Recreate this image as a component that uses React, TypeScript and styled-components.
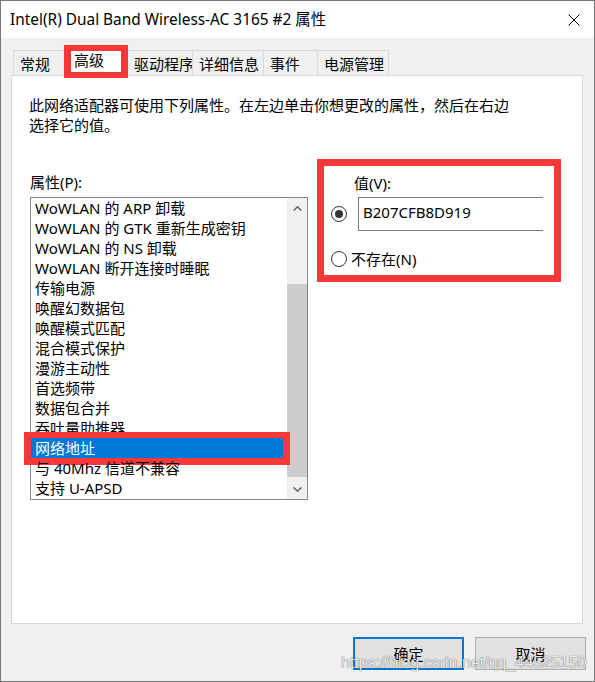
import React from 'react';
import styled, { createGlobalStyle } from 'styled-components';

const GlobalStyle = createGlobalStyle`
  html, body {
    margin: 0;
    padding: 0;
    background: #ffffff;
  }
  body {
    font-family: "Noto Sans", "Noto Sans CJK SC", sans-serif;
    font-size: 15px;
    color: #000000;
  }
  * {
    box-sizing: border-box;
  }
`;

const RED = '#f83838';

const Window = styled.div`
  position: relative;
  width: 595px;
  height: 682px;
  border: 1px solid #777777;
  background: #f0f0f0;
  display: flex;
  flex-direction: column;
`;

const TitleBar = styled.div`
  height: 37px;
  flex-shrink: 0;
  background: #ffffff;
  display: flex;
  align-items: center;
  justify-content: space-between;
  padding: 0 14px 0 9px;
`;

const Title = styled.span`
  font-size: 15.4px;
  line-height: 20px;
  white-space: nowrap;
`;

const Body = styled.div`
  flex: 1;
  padding: 12px 8px 0 10px;
  display: flex;
  flex-direction: column;
`;

const TabRow = styled.div`
  display: flex;
  align-items: flex-start;
  height: 25px;
  margin-left: 2px;
`;

const Tab = styled.div<{ $w: number; $active?: boolean }>`
  position: relative;
  width: ${p => p.$w}px;
  height: ${p => (p.$active ? 28 : 25)}px;
  margin-top: ${p => (p.$active ? -2 : 0)}px;
  padding: ${p => (p.$active ? '1px 0 0 9px' : '3px 0 0 6px')};
  font-size: 15px;
  line-height: 20px;
  white-space: nowrap;
  background: ${p => (p.$active ? '#ffffff' : '#f0f0f0')};
  border: 1px solid #d9d9d9;
  border-bottom: none;
  margin-right: -1px;
  z-index: ${p => (p.$active ? 2 : 1)};

  ${p =>
    p.$active &&
    `
    &::after {
      content: '';
      position: absolute;
      left: -1px;
      right: -1px;
      top: -4px;
      bottom: -2px;
      border: 7px solid ${RED};
      border-top-width: 6px;
      border-bottom-width: 6px;
    }
  `}
`;

const Panel = styled.div`
  width: 572px;
  height: 549px;
  background: #ffffff;
  border: 1px solid #d9d9d9;
  padding: 19px 0 0 17px;
`;

const Description = styled.div`
  font-size: 15px;
  line-height: 20px;
  white-space: nowrap;
`;

const Columns = styled.div`
  display: flex;
  align-items: flex-start;
  margin-top: 24px;
`;

const LeftColumn = styled.div`
  margin: 13px 0 0 1px;
  width: 278px;
`;

const FieldLabel = styled.div`
  font-size: 15px;
  line-height: 20px;
  white-space: nowrap;
`;

const ListBox = styled.div`
  margin-top: 5px;
  width: 278px;
  height: 303px;
  border: 1px solid #828790;
  display: flex;
`;

const Items = styled.div`
  flex: 1;
`;

const Item = styled.div<{ $selected?: boolean }>`
  position: relative;
  height: 20px;
  padding-left: 4px;
  font-size: 15px;
  line-height: 20px;
  white-space: nowrap;
  background: ${p => (p.$selected ? '#0078d7' : 'transparent')};
  color: ${p => (p.$selected ? '#ffffff' : '#000000')};

  ${p =>
    p.$selected &&
    `
    &::after {
      content: '';
      position: absolute;
      left: -7px;
      right: -3px;
      top: -6px;
      bottom: -7px;
      border: 7px solid ${RED};
      border-top-width: 6px;
    }
  `}
`;

const ScrollBar = styled.div`
  width: 20px;
  background: #f0f0f0;
  display: flex;
  flex-direction: column;
`;

const ScrollButton = styled.div`
  height: 20px;
  display: flex;
  align-items: center;
  justify-content: center;
`;

const ScrollTrack = styled.div`
  flex: 1;
  padding-top: 66px;
`;

const Thumb = styled.div`
  height: 193px;
  background: #cdcdcd;
`;

const RightGroup = styled.div`
  position: relative;
  margin-left: 9px;
  width: 244px;
  height: 123px;
  padding-top: 14px;

  &::after {
    content: '';
    position: absolute;
    inset: 0;
    border: 7px solid ${RED};
  }
`;

const ValueLabel = styled(FieldLabel)`
  margin-left: 37px;
`;

const RadioRow = styled.div<{ $gap: number }>`
  display: flex;
  align-items: center;
  padding-left: 14px;
  gap: ${p => p.$gap}px;
`;

const ValueRow = styled(RadioRow)`
  margin-top: 4px;
  height: 34px;
`;

const NoneRow = styled(RadioRow)`
  margin-top: 18px;
  height: 20px;
`;

const Radio = styled.span<{ $checked?: boolean }>`
  width: 16px;
  height: 16px;
  border-radius: 50%;
  border: 1px solid #333333;
  background: #ffffff;
  display: flex;
  align-items: center;
  justify-content: center;
  flex-shrink: 0;

  &::before {
    content: '';
    width: 8px;
    height: 8px;
    border-radius: 50%;
    background: ${p => (p.$checked ? '#333333' : 'transparent')};
  }
`;

const TextBox = styled.div`
  width: 185px;
  height: 34px;
  border: 1px solid #7a7a7a;
  border-right: none;
  padding: 4px 0 0 4px;
  font-size: 15px;
  line-height: 20px;
`;

const RadioText = styled.span`
  font-size: 15px;
  line-height: 20px;
  white-space: nowrap;
`;

const Footer = styled.div`
  display: flex;
  justify-content: flex-end;
  gap: 11px;
  margin-top: 13px;
`;

const Button = styled.div<{ $default?: boolean }>`
  width: 111px;
  height: 33px;
  background: #e1e1e1;
  border: ${p => (p.$default ? '2px solid #0078d7' : '1px solid #adadad')};
  display: flex;
  align-items: center;
  justify-content: center;
  font-size: 15px;
  line-height: 20px;
`;

const Watermark = styled.div`
  position: absolute;
  left: 340px;
  top: 652px;
  font-family: "Liberation Sans", Arial, sans-serif;
  font-size: 16px;
  line-height: 20px;
  color: rgba(255, 255, 255, 0.9);
  text-shadow: 0 0 1px rgba(0, 0, 0, 0.55), 0 0 1px rgba(0, 0, 0, 0.35);
  white-space: nowrap;
  pointer-events: none;
`;

const CloseIcon = () => (
  <svg width="12" height="12" viewBox="0 0 12 12">
    <path d="M0.5 0.5 L11.5 11.5 M11.5 0.5 L0.5 11.5" stroke="#000" strokeWidth="1" fill="none" />
  </svg>
);

const Chevron = ({ down }: { down?: boolean }) => (
  <svg width="9" height="5" viewBox="0 0 9 5" style={down ? { transform: 'rotate(180deg)' } : undefined}>
    <polyline points="0.7,4.5 4.5,0.8 8.3,4.5" stroke="#606060" strokeWidth="1.5" fill="none" />
  </svg>
);

const tabs = [
  { label: '常规', w: 52 },
  { label: '高级', w: 64, active: true },
  { label: '驱动程序', w: 66 },
  { label: '详细信息', w: 72 },
  { label: '事件', w: 55 },
  { label: '电源管理', w: 72 },
];

const properties = [
  'WoWLAN 的 ARP 卸载',
  'WoWLAN 的 GTK 重新生成密钥',
  'WoWLAN 的 NS 卸载',
  'WoWLAN 断开连接时睡眠',
  '传输电源',
  '唤醒幻数据包',
  '唤醒模式匹配',
  '混合模式保护',
  '漫游主动性',
  '首选频带',
  '数据包合并',
  '吞吐量助推器',
  '网络地址',
  '与 40Mhz 信道不兼容',
  '支持 U-APSD',
];

export default function App() {
  return (
    <>
      <GlobalStyle />
      <Window>
        <TitleBar>
          <Title>Intel(R) Dual Band Wireless-AC 3165 #2 属性</Title>
          <CloseIcon />
        </TitleBar>
        <Body>
          <TabRow>
            {tabs.map(t => (
              <Tab key={t.label} $w={t.w} $active={t.active}>
                {t.label}
              </Tab>
            ))}
          </TabRow>
          <Panel>
            <Description>
              <div>此网络适配器可使用下列属性。在左边单击你想更改的属性，然后在右边</div>
              <div>选择它的值。</div>
            </Description>
            <Columns>
              <LeftColumn>
                <FieldLabel>属性(P):</FieldLabel>
                <ListBox>
                  <Items>
                    {properties.map(p => (
                      <Item key={p} $selected={p === '网络地址'}>
                        {p}
                      </Item>
                    ))}
                  </Items>
                  <ScrollBar>
                    <ScrollButton>
                      <Chevron />
                    </ScrollButton>
                    <ScrollTrack>
                      <Thumb />
                    </ScrollTrack>
                    <ScrollButton>
                      <Chevron down />
                    </ScrollButton>
                  </ScrollBar>
                </ListBox>
              </LeftColumn>
              <RightGroup>
                <ValueLabel>值(V):</ValueLabel>
                <ValueRow $gap={11}>
                  <Radio $checked />
                  <TextBox>B207CFB8D919</TextBox>
                </ValueRow>
                <NoneRow $gap={4}>
                  <Radio />
                  <RadioText>不存在(N)</RadioText>
                </NoneRow>
              </RightGroup>
            </Columns>
          </Panel>
          <Footer>
            <Button $default>确定</Button>
            <Button>取消</Button>
          </Footer>
        </Body>
        <Watermark>https://blog.csdn.net/qq_44525150</Watermark>
      </Window>
    </>
  );
}
